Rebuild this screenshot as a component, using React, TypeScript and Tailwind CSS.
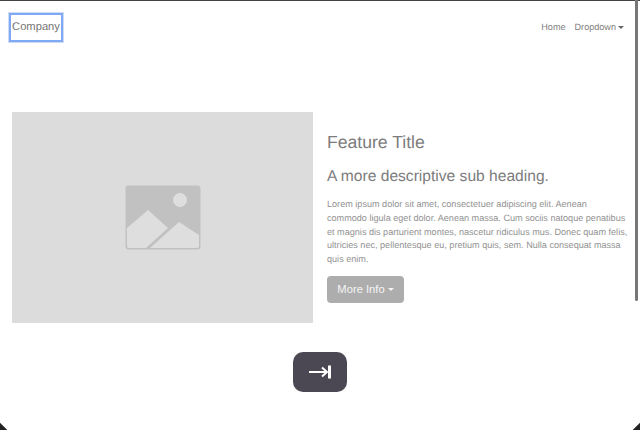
const font = { fontFamily: '"Liberation Sans", Arial, sans-serif' };

function Navbar() {
  return (
    <nav className="flex h-[53px] items-center justify-between pl-[9px] pr-[16px]">
      <a className="flex h-[29px] w-[54px] items-center justify-center border-[2px] border-[#7fa8f5] text-[11.2px] text-[#757575] outline outline-1 outline-[#cfdcf8]">
        Company
      </a>
      <div className="flex items-center gap-[9px] text-[9.1px] text-[#808080]">
        <a>Home</a>
        <a className="flex items-center gap-[2px]">
          Dropdown
          <span className="mt-[1px] border-x-[3px] border-t-[3px] border-x-transparent border-t-[#666]" />
        </a>
      </div>
    </nav>
  );
}

function Placeholder() {
  return (
    <div className="flex h-[211px] w-[301px] shrink-0 items-center justify-center bg-[#dcdcdc]">
      <svg width="76" height="65" viewBox="0 0 76 65">
        <rect x="0.5" y="0.5" width="75" height="64" rx="3" fill="#c1c1c1" />
        <circle cx="55" cy="15" r="7" fill="#dedede" />
        <path d="M2 43 L23 25 L43 43 L21 63 L4 63 Q2 63 2 61 Z" fill="#dedede" />
        <path d="M25 63 L54 37 L74 50 L74 61 Q74 63 72 63 Z" fill="#dedede" />
      </svg>
    </div>
  );
}

function Feature() {
  return (
    <section className="mt-[58px] flex gap-[14px] px-[12px]">
      <Placeholder />
      <div className="flex-1 pt-[18px]">
        <h1 className="text-[17.6px] leading-[24px] text-[#7c7c7c]">Feature Title</h1>
        <h2 className="mt-[12px] text-[15.6px] leading-[22px] text-[#7c7c7c]">A more descriptive sub heading.</h2>
        <p className="mt-[10px] text-[9.1px] leading-[13.75px] text-[#929292]">
          Lorem ipsum dolor sit amet, consectetuer adipiscing elit. Aenean commodo ligula eget dolor. Aenean massa. Cum sociis natoque penatibus et magnis dis parturient montes, nascetur ridiculus mus. Donec quam felis, ultricies nec, pellentesque eu, pretium quis, sem. Nulla consequat massa quis enim.
        </p>
        <button className="mt-[9px] flex h-[27px] w-[77px] items-center justify-center gap-[3px] rounded-[4px] bg-[#adadad] text-[11.2px] text-[#f4f4f4]">
          More Info
          <span className="border-x-[3.5px] border-t-[3.5px] border-x-transparent border-t-[#f4f4f4]" />
        </button>
      </div>
    </section>
  );
}

export default function App() {
  return (
    <div className="relative h-[430px] w-[640px] overflow-hidden bg-white [text-rendering:geometricPrecision]" style={font}>
      <div className="h-[1px] bg-[#444]" />
      <Navbar />
      <Feature />
      <div className="mt-[29px] flex justify-center">
        <button className="flex h-[40px] w-[54px] items-center justify-center rounded-[10px] bg-[#4b4753]">
          <svg width="24" height="14" viewBox="0 0 24 14" fill="none" stroke="#fff">
            <path d="M1 7 H19" strokeWidth="2" />
            <path d="M14 2.5 L19 7 L14 11.5" strokeWidth="2" />
            <path d="M21.5 0.5 V13.5" strokeWidth="3" />
          </svg>
        </button>
      </div>
      <div className="absolute right-[2px] top-0 h-[301px] w-[3px] rounded-b-full bg-[#777]" />
      <div className="absolute bottom-[-10px] left-[-10px] h-[16px] w-[16px] rotate-45 bg-[#222]" />
      <div className="absolute bottom-[-10px] right-[-10px] h-[16px] w-[16px] rotate-45 bg-[#222]" />
    </div>
  );
}
